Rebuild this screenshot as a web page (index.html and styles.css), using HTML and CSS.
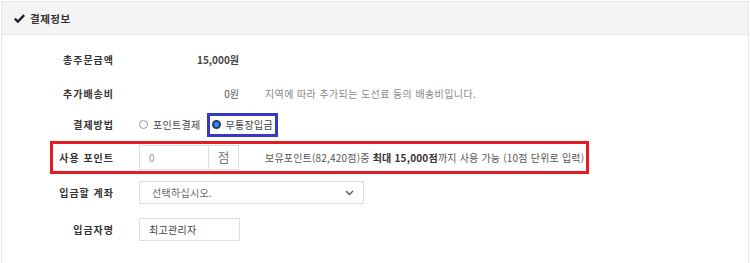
FILE: index.html
```html
<!DOCTYPE html>
<html lang="ko">
<head>
	<meta charset="UTF-8">
	<title>결제정보</title>
<link rel="stylesheet" href="styles.css">
</head>
<body>

<div id="box_pay">
	<div class="pay_head">
		<svg class="ico_chk" width="11" height="9" viewBox="0 0 11 9"><path d="M0.8 4.6 L3.9 7.6 L10.2 1.2" fill="none" stroke="#222" stroke-width="2.4"/></svg>
		<span>결제정보</span>
	</div>
	<div class="pay_body">
		<div class="riga r1">
			<div class="etich">총주문금액</div>
			<div class="importo forte">15,000원</div>
		</div>
		<div class="riga r2">
			<div class="etich">추가배송비</div>
			<div class="importo">0원</div>
			<div class="nota">지역에 따라 추가되는 도선료 등의 배송비입니다.</div>
		</div>
		<div class="riga r3">
			<div class="etich">결제방법</div>
			<label class="opz"><span class="radio"></span>포인트결제</label>
			<label class="opz scelta"><span class="radio on"></span>무통장입금</label>
		</div>
		<div class="riga r4 evid">
			<div class="etich">사용 포인트</div>
			<div class="campo_pt"><span class="inp_pt">0</span><span class="unita">점</span></div>
			<div class="nota scura">보유포인트(82,420점)중 <b>최대 15,000점</b>까지 사용 가능 (10점 단위로 입력)</div>
		</div>
		<div class="riga r5">
			<div class="etich">입금할 계좌</div>
			<div class="sel_conto">선택하십시오.
				<svg class="freccia" width="9" height="6" viewBox="0 0 9 6"><path d="M1 1 L4.5 4.5 L8 1" fill="none" stroke="#555" stroke-width="1.3"/></svg>
			</div>
		</div>
		<div class="riga r6">
			<div class="etich">입금자명</div>
			<div class="inp_nome">최고관리자</div>
		</div>
	</div>
</div>

</body>
</html>
```

FILE: styles.css
```css
body {margin:0;padding:1px;font-family:"Noto Sans CJK KR","Noto Sans",sans-serif;font-size:10px;color:#555;background:#fff;}

#box_pay {border:solid 1px #e6e6e6;border-bottom:none;height:262px;box-sizing:border-box;}

.pay_head {height:32px;background:#f4f4f4;border-bottom:solid 1px #e9e9e9;display:flex;align-items:center;padding-left:12px;font-size:10.5px;color:#333;font-weight:bold;}
.pay_head span {margin-left:5px;letter-spacing:0.5px;}

.pay_body {padding-top:7px;}

.riga {display:flex;align-items:center;}
.r1 {height:34px;}
.r2 {height:35px;}
.r3 {height:27px;}
.r4 {height:33px;margin-top:3px;}
.r5 {height:37px;}
.r6 {height:36px;}

.etich {width:112px;text-align:right;color:#333;font-weight:bold;letter-spacing:1px;flex:none;}

.importo {width:100px;margin-left:25px;text-align:right;}
.forte {font-weight:bold;color:#444;}
.nota {margin-left:26px;color:#888;letter-spacing:0.4px;}
.nota.scura {color:#555;letter-spacing:0.2px;}
.nota b {color:#333;}

.opz {display:flex;align-items:center;color:#444;letter-spacing:0.3px;}
.opz:first-of-type {margin-left:25px;}
.radio {width:9px;height:9px;border:solid 1px #999;border-radius:50%;margin-right:5px;box-sizing:border-box;background:#fff;}
.radio.on {border:solid 2px #243a63;background:#2f8cf3;}
.scelta {margin-left:6px;border:solid 3px #3737c8;padding:0 2px 0 2px;height:18px;}

.evid {margin-left:48px;width:539px;border:solid 3px #e31b23;box-sizing:border-box;}
.evid .etich {width:61px;}

.campo_pt {display:flex;margin-left:25px;}
.inp_pt {width:70px;height:25px;box-sizing:border-box;border:solid 1px #ddd;padding-left:9px;line-height:23px;color:#999;}
.unita {width:30px;height:25px;box-sizing:border-box;border:solid 1px #ddd;border-left:none;text-align:center;line-height:22px;font-size:13px;color:#777;}

.sel_conto {width:225px;height:23px;box-sizing:border-box;margin-left:25px;border:solid 1px #ddd;padding:0 9px 0 12px;display:flex;align-items:center;justify-content:space-between;color:#666;letter-spacing:0.3px;}

.inp_nome {width:101px;height:23px;box-sizing:border-box;margin-left:25px;border:solid 1px #ddd;padding-left:9px;line-height:21px;color:#444;letter-spacing:0.3px;}
```
